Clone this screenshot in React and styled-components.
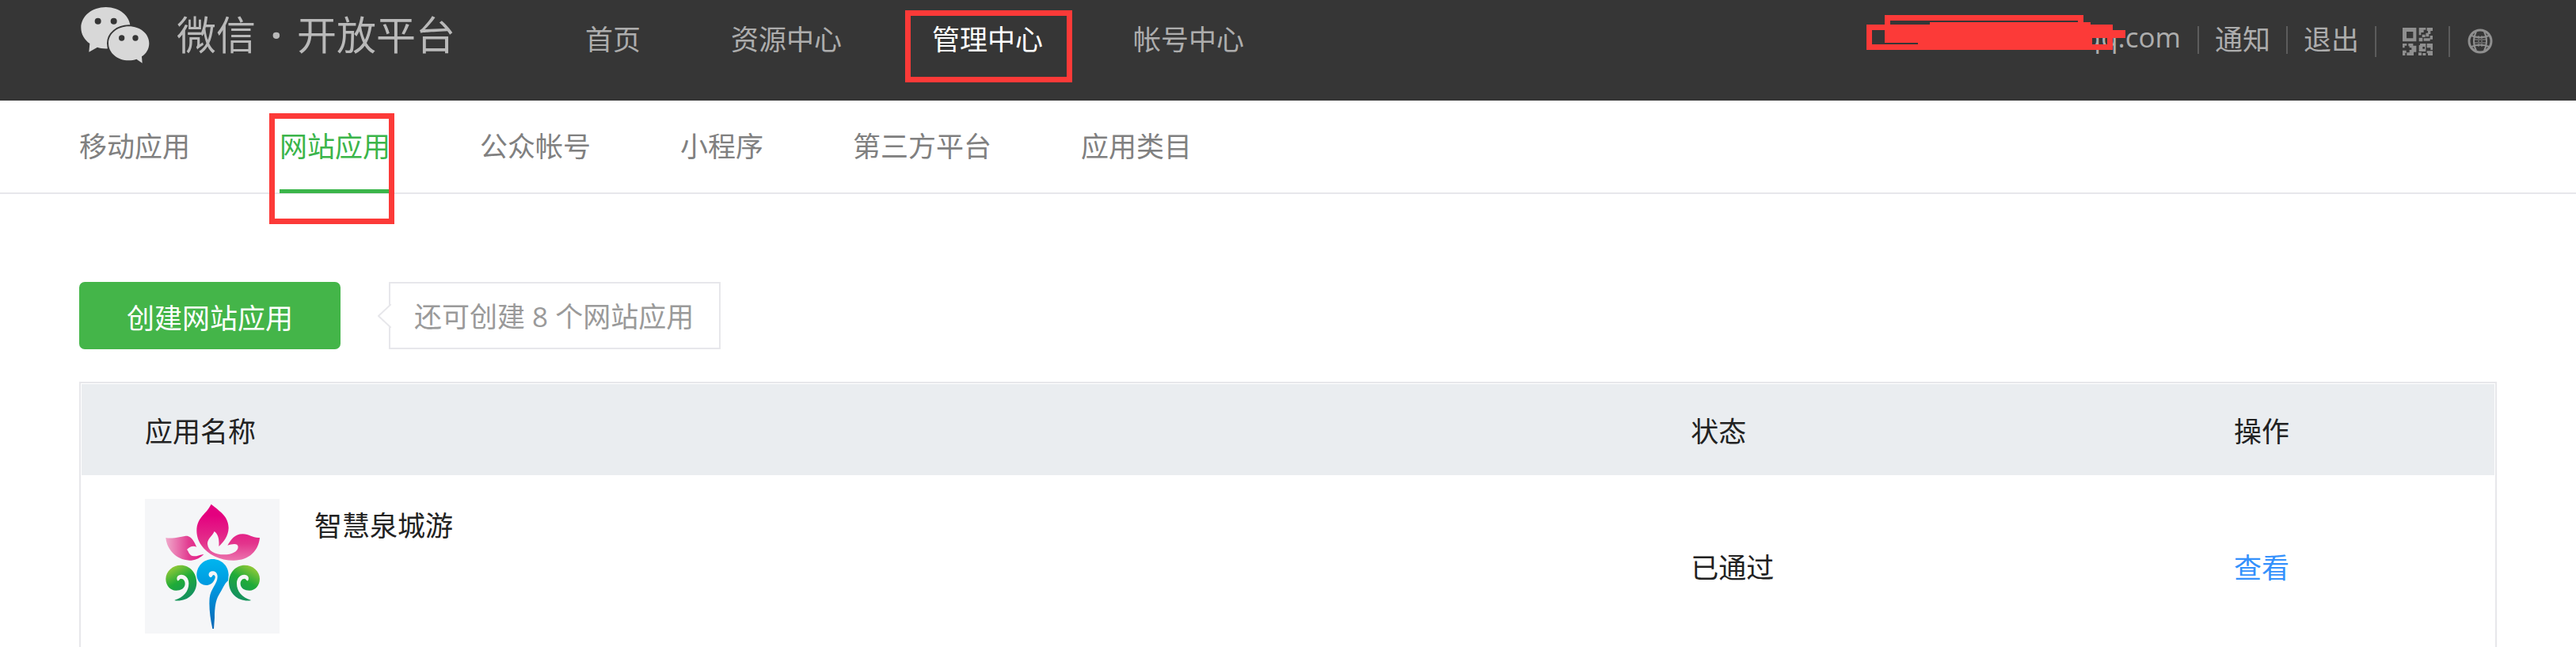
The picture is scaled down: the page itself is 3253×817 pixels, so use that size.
import React from "react";
import styled, { createGlobalStyle, css } from "styled-components";

const color = {
  dark: "#363636",
  muted: "#adadad",
  green: "#44b549",
  line: "#e7e7eb",
  text: "#222222",
  mark: "#fc3a38",
};

const GlobalStyle = createGlobalStyle`
  *, *::before, *::after { box-sizing: border-box; }
  body {
    margin: 0;
    background: #ffffff;
    color: ${color.text};
    font-family: "Open Sans", "Noto Sans CJK SC", sans-serif;
    font-size: 35px;
  }
  a { color: inherit; text-decoration: none; }
`;

const Page = styled.div`
  display: flex;
  flex-direction: column;
  min-height: 100vh;
`;

const Header = styled.header`
  display: flex;
  align-items: flex-start;
  padding: 0 105px 27px 102px;
  background: ${color.dark};
  color: ${color.muted};
  line-height: 100px;
  white-space: nowrap;
`;

const Brand = styled.a`
  display: flex;
  align-items: center;
  gap: 34px;
  margin-right: 164px;
  color: #b9b9b9;
  font-size: 50px;
  line-height: 88px;
`;

const BrandName = styled.span`
  display: flex;
`;

const BrandDot = styled.span`
  width: 52px;
  font-weight: 700;
  text-align: center;
`;

const MainNav = styled.nav`
  display: flex;
  gap: 114px;
`;

const MainLink = styled.a`
  position: relative;
  ${(p) => p.$active && css`color: #ffffff;`}
`;

const Mark = styled.span`
  position: absolute;
  border: 7px solid ${color.mark};
  pointer-events: none;
`;

const NavMark = styled(Mark)`
  inset: 13px -37px -4px -34px;
`;

const TabMark = styled(Mark)`
  inset: 16px -5px -40px -13px;
`;

const Tools = styled.div`
  display: flex;
  align-items: center;
  height: 100px;
  margin-left: auto;
`;

const Account = styled.span`
  position: relative;
  height: 100px;
  padding-right: 21px;
  line-height: 94px;
`;

const Scribble = styled.svg`
  position: absolute;
  right: 91px;
  top: 19px;
`;

const Tool = styled.a`
  display: flex;
  align-items: center;
  padding: 0 20px;
  &::before {
    content: "";
    width: 2px;
    height: 35px;
    margin-right: 20px;
    margin-left: -20px;
    background: #5c5c5c;
  }
`;

const IconTool = styled.button`
  display: flex;
  align-items: center;
  gap: ${(p) => p.$gap}px;
  padding: 4px ${(p) => p.$end}px 0 0;
  border: 0;
  background: none;
  color: #8f8f8f;
  &::before {
    content: "";
    width: 2px;
    height: 39px;
    background: #5c5c5c;
  }
  svg { display: block; }
`;

const SubNav = styled.nav`
  display: flex;
  gap: 113px;
  padding: 0 100px;
  border-bottom: 2px solid ${color.line};
  color: #808080;
  line-height: 116px;
  white-space: nowrap;
`;

const Tab = styled.a`
  position: relative;
  ${(p) =>
    p.$active &&
    css`
      color: #3bb54a;
      &::before {
        content: "";
        position: absolute;
        inset: auto 0 -1px 0;
        height: 5px;
        background: #3bb54a;
      }
    `}
`;

const Main = styled.main`
  display: flex;
  flex: 1;
  flex-direction: column;
  gap: 41px;
  padding: 111px 100px 0;
`;

const Actions = styled.div`
  display: flex;
  gap: 61px;
`;

const CreateButton = styled.button`
  height: 85px;
  padding: 2px 60px 0;
  border: 0;
  border-radius: 7px;
  background: ${color.green};
  color: #ffffff;
  font: inherit;
`;

const Tip = styled.p`
  position: relative;
  margin: 0;
  padding: 2px 32px 0 30px;
  border: 2px solid ${color.line};
  color: #9a9a9a;
  line-height: 79px;
`;

const TipArrow = styled.svg`
  position: absolute;
  left: -16px;
  top: 26px;
`;

const Panel = styled.section`
  flex: 1;
  padding: 1px 1px 0;
  border: 2px solid ${color.line};
  border-bottom: 0;
`;

const Table = styled.table`
  width: 100%;
  border-collapse: collapse;
  table-layout: fixed;
`;

const Col = styled.col`
  width: ${(p) => p.$width};
`;

const HeadCell = styled.th`
  height: 115px;
  padding: ${(p) => (p.$first ? "0 0 0 80px" : "0")};
  background: #eaedf0;
  font-weight: 400;
  text-align: left;
`;

const Cell = styled.td`
  padding: ${(p) => (p.$first ? "30px 0 15px 80px" : "28px 0 15px")};
`;

const AppInfo = styled.div`
  display: flex;
  gap: 44px;
  line-height: 68px;
`;

const ViewLink = styled.a`
  color: #3491fc;
`;

const WechatLogo = () => (
  <svg width="87" height="71" viewBox="12 15 261 213" aria-hidden="true">
    <g fill="#d8d8d8">
      <path d="M107 15C55 15 13 49 13 93c0 25 13 46 33 60l-3 32 32-18c10 3 22 6 42 5 40-2 83-35 83-79 0-44-41-78-93-78z" />
      <path
        stroke={color.dark}
        strokeWidth="12"
        paintOrder="stroke"
        d="M194 88c-43 0-77 28-77 64s34 65 77 65c10 0 20-2 29-5l22 15-2-25c17-11 28-29 28-50 0-36-34-64-77-64z"
      />
    </g>
    <g fill={color.dark}>
      <circle cx="77" cy="68" r="12" />
      <circle cx="137" cy="68" r="12" />
      <circle cx="167" cy="132" r="11" />
      <circle cx="219" cy="132" r="11" />
    </g>
  </svg>
);

const QrIcon = () => (
  <svg width="38" height="35" viewBox="0 0 114 105" fill="currentColor" aria-hidden="true">
    <path fillRule="evenodd" d="M0 0h52v52H0zM15 15v25h25V15z" />
    <path d="M62 0h26v8h-8v10H70v10h-8zM92 0h22v12h-8v12h-6v10H88V20h8v-8h-4zM74 26h12v10H74zM62 38h14v14H62zM80 40h24v10H80zM104 30h10v14h-10z" />
    <path d="M0 60h16v8H8v8H0zM22 60h18v8h12v24h-10v13H16V94h10V84h8v-8h-8v-6h-4zM0 86h14v10h-4v9H0z" />
    <path fillRule="evenodd" d="M66 60h22v30H62V66h4zM76 72v8h8v-8zM92 60h22v24h-8v-8H92zM92 88h22v17H96v-8h-4zM60 94h12v11H60zM76 96h12v9H76z" />
  </svg>
);

const GlobeIcon = () => (
  <svg width="32" height="32" viewBox="0 0 32 32" fill="none" stroke="currentColor" aria-hidden="true">
    <circle cx="16" cy="16" r="14" strokeWidth="3" />
    <path strokeWidth="2" d="M11 4c-4 7-4 17 0 24M21 4c4 7 4 17 0 24M5 9c6 3 16 3 22 0M5 23c6-3 16-3 22 0" />
    <path strokeWidth="2" opacity=".5" d="M14 9v14M18 9v14M9 14h14M9 18h14" />
  </svg>
);

const AppLogo = () => (
  <svg width="170" height="170" viewBox="9 30 510 510" role="img" aria-label="智慧泉城游">
    <defs>
      <linearGradient id="petal" x1="0" y1="0" x2="0" y2="1">
        <stop offset=".2" stopColor="#e4007f" />
        <stop offset=".7" stopColor="#e3348c" />
        <stop offset="1" stopColor="#ec74ae" />
      </linearGradient>
      <linearGradient id="side">
        <stop offset="0" stopColor="#f0a9cb" />
        <stop offset=".6" stopColor="#e23d91" />
        <stop offset="1" stopColor="#e61685" />
      </linearGradient>
      <linearGradient id="curl" x1=".1" y1="0" x2=".6" y2="1">
        <stop offset="0" stopColor="#a9cf38" />
        <stop offset=".5" stopColor="#1fab38" />
        <stop offset="1" stopColor="#149062" />
      </linearGradient>
      <linearGradient id="stem" x1="0" y1="0" x2="0" y2="1">
        <stop offset="0" stopColor="#00b5ef" />
        <stop offset=".45" stopColor="#0094dc" />
        <stop offset="1" stopColor="#0a66b4" />
      </linearGradient>
      <path
        id="spiral"
        d="M122 413C155 403 175 380 175 350C175 330 162 317 147 317C132 317 126 330 133 340C138 342 139 332 145 332C156 332 162 342 161 353C160 368 145 377 127 377C105 377 88 358 88 333C88 303 115 281 145 281C180 281 205 310 205 348C203 390 170 420 122 415Z"
      />
    </defs>
    <path fill="#f5f6f8" d="M9 30h510v510H9z" />
    <path
      fill="url(#petal)"
      d="M260 50C290 75 326 95 326 140C325 170 308 192 289 210C291 185 288 165 272 153C265 170 246 180 246 200C248 228 275 241 308 241C340 241 362 228 362 212C362 196 340 200 322 206C335 185 348 163 380 163C405 163 420 180 444 177C440 225 405 263 345 263C270 263 205 215 205 150C205 100 240 90 260 50Z"
    />
    <path
      fill="url(#side)"
      d="M88 177C115 183 150 170 170 170C190 175 198 198 205 212C192 205 175 213 168 222C174 226 176 247 195 247C210 247 217 241 232 240C215 255 200 263 178 263C125 260 92 220 88 177Z"
    />
    <use href="#spiral" fill="url(#curl)" />
    <use href="#spiral" fill="url(#curl)" transform="translate(532 0) scale(-1 1)" />
    <path
      fill="url(#stem)"
      d="M265 522C256 480 251 440 254 405C258 370 284 352 284 325C284 308 272 303 263 304C250 306 246 320 257 327C264 328 263 319 270 318C278 322 276 330 271 339C265 350 255 357 241 357C220 357 205 338 205 318C205 285 232 258 265 258C300 258 326 285 326 318L324 340C310 350 302 375 290 392C275 415 273 450 273 480L270 522Z"
    />
  </svg>
);

const tabs = ["移动应用", "网站应用", "公众帐号", "小程序", "第三方平台", "应用类目"];
const sections = ["首页", "资源中心", "管理中心", "帐号中心"];

export default function App() {
  return (
    <Page>
      <GlobalStyle />
      <Header>
        <Brand href="#home">
          <WechatLogo />
          <BrandName>
            微信<BrandDot>·</BrandDot>开放平台
          </BrandName>
        </Brand>
        <MainNav>
          {sections.map((name) => (
            <MainLink key={name} href="#section" $active={name === "管理中心"}>
              {name}
              {name === "管理中心" && <NavMark />}
            </MainLink>
          ))}
        </MainNav>
        <Tools>
          <Account>
            @qq.com
            <Scribble width="327" height="44" viewBox="0 0 981 132" fill={color.mark} aria-hidden="true">
              <path
                fillRule="evenodd"
                d="M69 0H822V27H849V36H933V57H981V87H933V132H0V36H69ZM90 21V36H240V27H801V21ZM21 57V111H195V105H69V57ZM855 87V111H912V87Z"
              />
            </Scribble>
          </Account>
          <Tool href="#notice">通知</Tool>
          <Tool href="#logout">退出</Tool>
          <IconTool type="button" aria-label="二维码" $gap={33} $end={20}>
            <QrIcon />
          </IconTool>
          <IconTool type="button" aria-label="语言" $gap={22} $end={0}>
            <GlobeIcon />
          </IconTool>
        </Tools>
      </Header>
      <SubNav>
        {tabs.map((name) => (
          <Tab key={name} href="#tab" $active={name === "网站应用"}>
            {name}
            {name === "网站应用" && <TabMark />}
          </Tab>
        ))}
      </SubNav>
      <Main>
        <Actions>
          <CreateButton type="button">创建网站应用</CreateButton>
          <Tip>
            还可创建 8 个网站应用
            <TipArrow width="17" height="30" viewBox="0 0 17 30" aria-hidden="true">
              <path d="M17 0L1 15L17 30" fill="#ffffff" stroke={color.line} strokeWidth="2" />
            </TipArrow>
          </Tip>
        </Actions>
        <Panel>
          <Table>
            <colgroup>
              <Col $width="66.7%" />
              <Col $width="22.5%" />
              <Col />
            </colgroup>
            <thead>
              <tr>
                <HeadCell $first scope="col">应用名称</HeadCell>
                <HeadCell scope="col">状态</HeadCell>
                <HeadCell scope="col">操作</HeadCell>
              </tr>
            </thead>
            <tbody>
              <tr>
                <Cell $first>
                  <AppInfo>
                    <AppLogo />
                    智慧泉城游
                  </AppInfo>
                </Cell>
                <Cell>已通过</Cell>
                <Cell>
                  <ViewLink href="#view">查看</ViewLink>
                </Cell>
              </tr>
            </tbody>
          </Table>
        </Panel>
      </Main>
    </Page>
  );
}
